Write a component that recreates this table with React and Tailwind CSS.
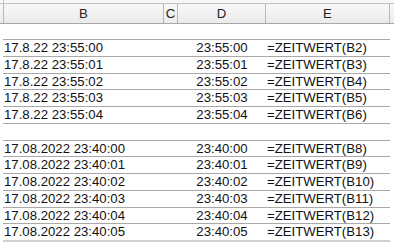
import React from "react";

const cols = "grid grid-cols-[4px_160px_14px_88px_124px_4px]";

const groupA = [
  ["17.8.22 23:55:00", "23:55:00", "=ZEITWERT(B2)"],
  ["17.8.22 23:55:01", "23:55:01", "=ZEITWERT(B3)"],
  ["17.8.22 23:55:02", "23:55:02", "=ZEITWERT(B4)"],
  ["17.8.22 23:55:03", "23:55:03", "=ZEITWERT(B5)"],
  ["17.8.22 23:55:04", "23:55:04", "=ZEITWERT(B6)"],
];

const groupB = [
  ["17.08.2022 23:40:00", "23:40:00", "=ZEITWERT(B8)"],
  ["17.08.2022 23:40:01", "23:40:01", "=ZEITWERT(B9)"],
  ["17.08.2022 23:40:02", "23:40:02", "=ZEITWERT(B10)"],
  ["17.08.2022 23:40:03", "23:40:03", "=ZEITWERT(B11)"],
  ["17.08.2022 23:40:04", "23:40:04", "=ZEITWERT(B12)"],
  ["17.08.2022 23:40:05", "23:40:05", "=ZEITWERT(B13)"],
];

const Row = ({ row }) => (
  <div className="ml-[3px] w-[387px] h-[16.75px] border-t border-[#a9a9a9] flex leading-[15px]">
    <div className="w-[161px] pl-[1px]">{row[0]}</div>
    <div className="w-[14px]" />
    <div className="w-[88px] text-center">{row[1]}</div>
    <div className="w-[124px] pl-[1px]">{row[2]}</div>
  </div>
);

export default function App() {
  return (
    <div className="w-[394px] h-[247px] overflow-hidden bg-white text-[13.2px] text-[#111] font-['Liberation_Sans',Arial,sans-serif]">
      <div className={`${cols} h-[4px] bg-[#f7f7f7] border-b border-[#c4c4c4]`}>
        <div className="border-r border-[#c4c4c4]" />
      </div>
      <div className={`${cols} h-[20px] bg-gradient-to-b from-[#f8f8f8] to-[#ebebeb] border-b border-[#a8a8a8] leading-[19px] text-[#222]`}>
        <div className="border-r border-[#b8b8b8]" />
        <div className="border-r border-[#b8b8b8] text-center">B</div>
        <div className="border-r border-[#b8b8b8] text-center">C</div>
        <div className="border-r border-[#b8b8b8] text-center">D</div>
        <div className="border-r border-[#b8b8b8] text-center">E</div>
        <div />
      </div>
      <div className="h-[15px]" />
      {groupA.map((r) => (
        <Row key={r[2]} row={r} />
      ))}
      <div className="ml-[3px] w-[387px] h-[16.75px] border-t border-[#a9a9a9]" />
      {groupB.map((r) => (
        <Row key={r[2]} row={r} />
      ))}
      <div className="ml-[3px] w-[387px] h-[2px] bg-[#cfcfcf]" />
    </div>
  );
}
